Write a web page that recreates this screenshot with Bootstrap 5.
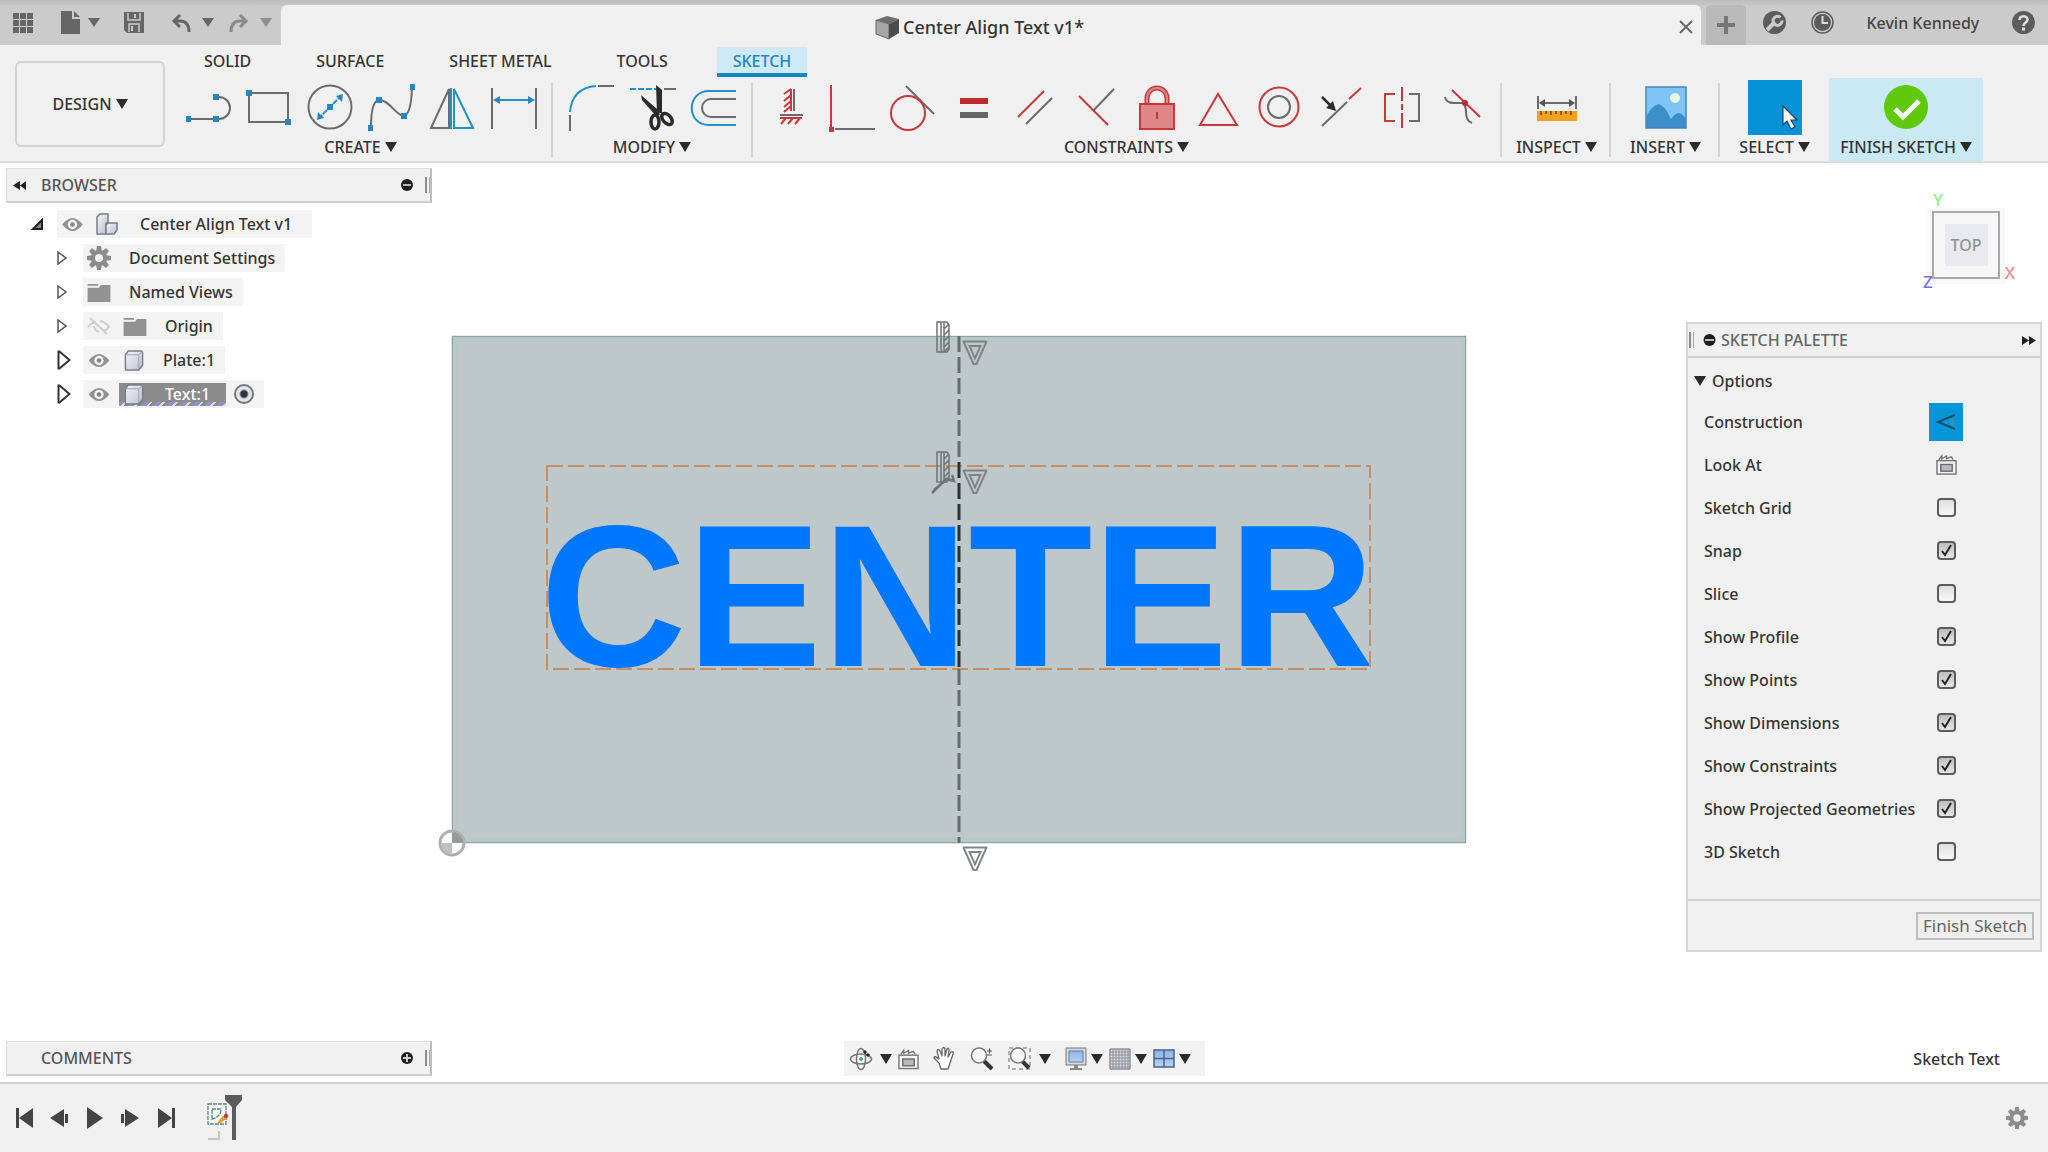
<!DOCTYPE html>
<html lang="en">
<head>
<meta charset="utf-8">
<meta name="viewport" content="width=device-width, initial-scale=1">
<title>Center Align Text v1</title>
<link href="https://cdn.jsdelivr.net/npm/bootstrap@5.3.0/dist/css/bootstrap.min.css" rel="stylesheet">
<style>
  :root { --ink:#353535; --chrome:#f0f0f0; --rule:#d3d3d3; --brand:#0696d7; --red:#c8373c; --gray:#6b6b6b; }
  body { font-family:"Noto Sans","Open Sans",sans-serif; font-size:16px; line-height:24px; color:var(--ink); background:#fff; font-weight:500; }
  svg { overflow:visible; flex:none; display:block; }
  .plain { background:none; border:0; padding:0; color:inherit; font-weight:inherit; line-height:inherit; }
  .tri { width:0; height:0; border:6px solid transparent; border-top:10px solid #2b2b2b; border-bottom:0; display:block; flex:none; }
  .tri.soft { border-top-color:#666; border-top-width:9px; }
  .tri.faint { border-top-color:#8f8f8f; border-top-width:9px; }

  .titlebar { height:45px; background:linear-gradient(#bdbdbd 0,#c4c4c4 4px,#cbcbcb 6px,#cbcbcb 100%); color:#444; }
  .quick { width:281px; padding-left:13px; }
  .quick .wide { margin-left:28px; }
  .quick .near { margin-left:16px; }
  .quick .mid { margin-left:24px; }
  .quick .step { gap:12px; }
  .doc-tab { height:40px; background:var(--chrome); border-radius:6px 0 0 0; color:var(--ink); font-size:18px; border-top-right-radius:6px; }
  .new-tab { width:40px; height:40px; background:#b9b9b9; border-radius:5px 5px 0 0; margin-left:5px; }
  .account { width:302px; font-size:16px; padding-left:17px; padding-right:13px; }

  .ribbon { height:118px; background:var(--chrome); border-bottom:2px solid #dcdcdc; }
  .workspace { width:150px; height:86px; margin:16px 5px 0 15px; border:2px solid var(--rule); border-radius:6px; }
  .ribbon-tabs { height:33px; gap:33px; padding-left:18px; }
  .ribbon-tabs a { color:var(--ink); text-decoration:none; padding:2px 16px 0; height:30px; margin-top:2px; line-height:24px; }
  .ribbon-tabs a.active { background:#cfeaf6; color:#1a88c6; border-bottom:4px solid #1287c0; }
  .tool-group { height:83px; padding:7px 18px 0 16px; position:relative; }
  .ruled::after { content:""; position:absolute; right:0; top:5px; height:74px; width:2px; background:var(--rule); }
  .tools { height:44px; gap:17px; }
  .tool-label { height:34px; gap:4px; line-height:34px; padding-top:2px; white-space:nowrap; }
  .single { width:109px; padding-left:0; padding-right:0; }
  .finish { width:154px; background:#c9eaf5; padding-left:0; padding-right:0; }
  .g { stroke:var(--gray); stroke-width:2; fill:none; }
  .r { stroke:var(--red); stroke-width:2; fill:none; }
  .b { stroke:#2191c9; stroke-width:2; fill:none; }
  .bf { fill:#2b85bd; }

  .stage { min-height:0; }
  .scene { position:absolute; inset:0; width:100%; height:100%; }
  .hud { position:relative; height:100%; padding:5px 6px 6px; }
  .panel-head { width:426px; height:35px; background:#f0f0f0; border:1px solid #dedede; border-right:2px solid #bdbdbd; border-bottom:2px solid #cfcfcf; color:#555; padding:0 0 0 6px; }
  .panel-head .name { padding-left:15px; }
  .panel-head .name.inset { padding-left:28px; }
  .grip { width:5px; height:16px; border-left:2px solid #8d8d8d; border-right:1px solid #aaa; }
  .tree { list-style:none; margin:4px 0 0; padding:0; }
  .tree li { height:34px; display:flex; align-items:center; }
  .twist { width:26px; margin-left:51px; height:28px; display:flex; align-items:center; }
  .root .twist { margin-left:25px; }
  .node { height:28px; background:#f3f3f3; display:flex; align-items:center; padding-left:4px; }
  .node svg { margin-right:12px; }
  .node .cap { padding-left:6px; padding-right:10px; white-space:nowrap; }
  .root .node .cap { padding-left:10px; padding-right:20px; }
  .picked { height:23px; background:#8b8b8b; color:#fff; padding:0 16px 0 4px; margin-left:-4px; margin-right:8px; position:relative; }
  .picked::after { content:""; position:absolute; left:0; right:0; bottom:0; height:4px; background:repeating-linear-gradient(135deg,#8f93c8 0 4px,#d4d6dc 4px 6px,#8b8b8b 6px 9px); }
  .picked svg { position:relative; z-index:1; }
  .act { appearance:none; width:20px; height:20px; border-radius:50%; border:2px solid #777; background:radial-gradient(circle,#2f3340 0 3px,#e2e4ea 5px); margin:0 10px 0 0; }

  .cube { width:120px; height:110px; margin:21px 0 23px; }
  .palette { width:356px; background:#f0f0f0; border:2px solid #d6d6d6; }
  .palette-head { height:34px; border-bottom:2px solid #d0d0d0; color:#666; padding:0 4px 0 1px; gap:5px; }
  .fold { height:38px; gap:6px; margin:4px 0 0 6px; }
  .opt { height:43px; padding:0 77px 0 16px; font-size:16px; }
  .opt .slot { width:34px; }
  .opt input { appearance:none; width:19px; height:19px; margin:0; border:2px solid #5c5c5c; border-radius:4px; background:linear-gradient(#e0e0e0,#f7f7f7); }
  .opt input:checked { background:url("data:image/svg+xml,%3Csvg xmlns='http://www.w3.org/2000/svg' viewBox='0 0 15 15'%3E%3Cpath d='M3 8l3 4 6-10' fill='none' stroke='%23222' stroke-width='2'/%3E%3C/svg%3E") center/15px no-repeat,linear-gradient(#bdbdbd,#e6e6e6); }
  .cons { width:34px; height:38px; background:var(--brand); }
  .palette-foot { border-top:2px solid #d0d0d0; height:51px; padding:0 6px; margin-top:26px; }
  .done { height:28px; border:2px solid #bcbcbc; background:#eee; color:#666; font-size:17px; line-height:22px; padding:0 5px; }

  .navbox { height:35px; background:#f2f2f2; width:361px; padding:0 13px 0 6px; }
  .bottom-left, .bottom-right { flex:1 1 0; }
  .status { margin-right:42px; }
  .timeline { height:70px; background:var(--chrome); border-top:2px solid #d3d3d3; padding:0 20px 0 15px; }
</style>
<script src="https://cdn.jsdelivr.net/npm/bootstrap@5.3.0/dist/js/bootstrap.bundle.min.js"></script>
</head>
<body>
<svg width="0" height="0" class="position-absolute" aria-hidden="true">
  <defs>
    <linearGradient id="steel" x1="0" y1="0" x2="1" y2="1"><stop offset="0" stop-color="#f4f6fb"/><stop offset="1" stop-color="#bcc0cb"/></linearGradient>
    <linearGradient id="screen" x1="0" y1="0" x2="0" y2="1"><stop offset="0" stop-color="#8fb5e4"/><stop offset="1" stop-color="#b5d0f2"/></linearGradient>
  </defs>
  <symbol id="eye" viewBox="0 0 24 16"><path d="M1 8Q12-6 23 8Q12 22 1 8z" fill="#929292"/><circle cx="12" cy="8" r="5" fill="#f3f3f3"/><circle cx="12" cy="8" r="2.5" fill="#858585"/></symbol>
  <symbol id="folder" viewBox="0 0 24 20"><path d="M0 1h11v2H0zM0 5h12l2-3h10v18H0z" fill="#929292"/></symbol>
  <symbol id="gear" viewBox="0 0 24 24"><g fill="#8c8c8c"><path d="M10 0h4l1 6h-6z"/><path d="M10 0h4l1 6h-6z" transform="rotate(45 12 12)"/><path d="M10 0h4l1 6h-6z" transform="rotate(90 12 12)"/><path d="M10 0h4l1 6h-6z" transform="rotate(135 12 12)"/><path d="M10 0h4l1 6h-6z" transform="rotate(180 12 12)"/><path d="M10 0h4l1 6h-6z" transform="rotate(225 12 12)"/><path d="M10 0h4l1 6h-6z" transform="rotate(270 12 12)"/><path d="M10 0h4l1 6h-6z" transform="rotate(315 12 12)"/></g><circle cx="12" cy="12" r="6" fill="none" stroke="#8c8c8c" stroke-width="4"/></symbol>
  <symbol id="solid" viewBox="0 0 22 22"><path d="M2 5l3-4h14l1 2v13l-4 5H2z" fill="url(#steel)" stroke="#777c8a" stroke-width="1.5" stroke-linejoin="round"/><path d="M2 5h14v15M16 5l4-3" fill="none" stroke="#9a9eaa" stroke-width="1"/></symbol>
  <symbol id="lookat" viewBox="0 0 22 22"><rect x="1" y="7" width="20" height="14" fill="#f4f4f4" stroke="#777" stroke-width="1.5"/><rect x="5" y="11" width="12" height="7" fill="#b8bcc2" stroke="#6b6b6b" stroke-width="1.5"/><path d="M3 6l3-4v3l5-3v3l5-2 2 3" fill="none" stroke="#777" stroke-width="1.5"/></symbol>
  <symbol id="twist-s" viewBox="0 0 10 14"><path d="M1 1l8 6-8 6z" fill="#fff" stroke="#555" stroke-width="1.5"/></symbol>
  <symbol id="twist-l" viewBox="0 0 14 20"><path d="M1.500 1.500h1l10 8.500-10 8.500h-1z" fill="#fff" stroke="#333" stroke-width="2"/></symbol>
  <symbol id="vtri" viewBox="0 0 26 26"><path d="M1.500 1.500h23L14.500 24h-3z" fill="none" stroke="#7d8485" stroke-width="1.900" stroke-linejoin="round"/><path d="M7.500 6h11L13 18.500z" fill="none" stroke="#7d8485" stroke-width="1.900"/></symbol>
  <symbol id="rule" viewBox="0 0 14 32"><path d="M1 1h10l2 3v24l-2 3H1zM5 1v30M8 1v30M8 8l5-5M8 14l5-5M8 20l5-5M8 26l5-5M8 31l5-5" fill="none" stroke="#6f7677" stroke-width="1.500"/></symbol>
</svg>

<div class="vh-100 d-flex flex-column overflow-hidden">
  <header class="titlebar d-flex align-items-end flex-shrink-0">
    <div class="quick d-flex align-items-center h-100">
      <button class="plain" aria-label="Data panel"><svg width="20" height="20" fill="#666"><path d="M0 0h6v6H0zM7 0h6v6H7zM14 0h6v6h-6zM0 7h6v6H0zM7 7h6v6H7zM14 7h6v6h-6zM0 14h6v6H0zM7 14h6v6H7zM14 14h6v6h-6z"/></svg></button>
      <button class="plain wide d-flex align-items-center gap-2" aria-label="File"><svg width="19" height="23" fill="#666"><path d="M0 0h11v8h8v15H0zM13 0l6 6h-6z"/></svg><span class="tri soft"></span></button>
      <button class="plain mid" aria-label="Save"><svg width="20" height="21"><path d="M0 0h20v21H3l-3-3z" fill="#666"/><path d="M4 1v7h12V1M5 20v-8h10v8" fill="none" stroke="#cbcbcb" stroke-width="1.500"/><path d="M11 2v4M8 14v5" stroke="#cbcbcb" stroke-width="2"/></svg></button>
      <button class="plain wide step d-flex align-items-center" aria-label="Undo"><svg width="18" height="18" fill="none" stroke="#666" stroke-width="3"><path d="M8 1L2 7l6 6M2 7h6q9 0 9 11"/></svg><span class="tri soft"></span></button>
      <button class="plain near step d-flex align-items-center" aria-label="Redo"><svg width="18" height="18" fill="none" stroke="#8a8a8a" stroke-width="3"><path d="M10 1l6 6-6 6M16 7h-6Q1 7 1 18"/></svg><span class="tri faint"></span></button>
    </div>
    <div class="doc-tab flex-fill d-flex align-items-center pe-1">
      <div class="flex-fill d-flex justify-content-center align-items-center gap-1 pt-1">
        <svg width="23" height="23"><path d="M0 4l11-4 12 3-10 5z" fill="#6e6e6e"/><path d="M0 4l13 4v15L0 18z" fill="#a6a6a6" stroke="#666"/><path d="M13 8l10-5v14l-10 6z" fill="#4c4c4c"/></svg>
        <span>Center Align Text v1*</span>
      </div>
      <button class="plain pe-1 pt-1" aria-label="Close"><svg width="14" height="14" stroke="#666" stroke-width="2"><path d="M1 1l12 12M13 1L1 13"/></svg></button>
    </div>
    <button class="plain new-tab d-flex align-items-center justify-content-center" aria-label="New tab"><svg width="18" height="18" fill="#777"><path d="M7 0h4v7h7v4h-7v7H7v-7H0V7h7z"/></svg></button>
    <div class="account d-flex align-items-center justify-content-between h-100">
      <button class="plain" aria-label="Extensions"><svg width="23" height="23"><circle cx="11.500" cy="11.500" r="11.500" fill="#5c5c5c"/><path d="M4 19l8-8" stroke="#cbcbcb" stroke-width="4"/><path d="M17.500 6.500a4.500 4.500 0 1 0 1.500 3" fill="none" stroke="#cbcbcb" stroke-width="3"/></svg></button>
      <button class="plain" aria-label="Job status"><svg width="23" height="23"><circle cx="11.500" cy="11.500" r="10.500" fill="none" stroke="#5c5c5c" stroke-width="1.500"/><circle cx="11.500" cy="11.500" r="8.500" fill="#5c5c5c"/><path d="M11.500 5v7H17" fill="none" stroke="#ddd" stroke-width="2"/></svg></button>
      <button class="plain px-2">Kevin Kennedy</button>
      <button class="plain" aria-label="Help"><svg width="23" height="23"><circle cx="11.500" cy="11.500" r="11.500" fill="#5c5c5c"/><path d="M7.500 9c0-5 8-5 8-.5 0 3-4 3-4 6.500" fill="none" stroke="#ddd" stroke-width="2.500"/><rect x="10" y="16.500" width="3" height="3" fill="#ddd"/></svg></button>
    </div>
  </header>

  <div class="ribbon d-flex flex-shrink-0">
    <button class="plain workspace d-flex align-items-center justify-content-center gap-1">DESIGN<span class="tri"></span></button>
    <div class="flex-fill">
      <nav class="ribbon-tabs d-flex">
        <a href="#">SOLID</a><a href="#">SURFACE</a><a href="#">SHEET METAL</a><a href="#">TOOLS</a><a href="#" class="active">SKETCH</a>
      </nav>
      <div class="d-flex">
        <div class="tool-group ruled">
          <div class="tools d-flex align-items-center">
            <button class="plain" aria-label="Line"><svg width="44" height="44"><path class="g" d="M2 34h28M30 12h3a11 11 0 0 1 0 22h-3"/><path class="bf" d="M0 31h5v6H0zM27 31h6v6h-6zM27 9h6v6h-6z"/></svg></button>
            <button class="plain" aria-label="Rectangle"><svg width="44" height="44"><path class="g" d="M2 8h39v29H2z"/><path class="bf" d="M-1 5h6v6h-6zM38 34h6v6h-6z"/></svg></button>
            <button class="plain" aria-label="Circle"><svg width="44" height="44"><circle class="g" cx="22" cy="22" r="21.500"/><path class="b" d="M14 30l-3 3M30 14l3-3M15 29l4-4M25 19l4-4"/><path class="bf" d="M9 35l1-8 6 6zM35 9l-1 8-6-6zM19 19h6v6h-6z"/></svg></button>
            <button class="plain" aria-label="Spline"><svg width="44" height="44"><path class="g" d="M2 42Q2 16 10 15C19 14 26 29 34 31Q42 31 43 3"/><path class="bf" d="M-1 40h5v6h-5zM7 12h6v6H7zM32 28h6v6h-6zM41-1h5v6h-5z"/></svg></button>
            <button class="plain" aria-label="Mirror"><svg width="44" height="44"><path class="g" d="M1 43h18V4z"/><path class="b" d="M24 4v39h19z"/><path class="b" d="M21 3v41"/></svg></button>
            <button class="plain" aria-label="Sketch dimension"><svg width="44" height="44"><path class="g" d="M1 3v41M45 3v41"/><path class="b" d="M4 15h38"/><path class="bf" d="M2 15l7-4v8zM44 15l-7-4v8z"/></svg></button>
          </div>
          <button class="plain tool-label d-flex align-items-center justify-content-center w-100">CREATE<span class="tri"></span></button>
        </div>
        <div class="tool-group ruled">
          <div class="tools d-flex align-items-center">
            <button class="plain" aria-label="Fillet"><svg width="44" height="44"><path class="g" d="M1 46V30M29 1h16"/><path class="b" d="M1 27Q3 3 27 1"/></svg></button>
            <button class="plain" aria-label="Trim"><svg width="44" height="44"><path class="b" d="M0 4h26" stroke-dasharray="6 2"/><path class="g" d="M34 4h12"/><path d="M26 0l6 5v23h-5zM11 10l16 14 3 6-4 1L12 15z" fill="#2b2b2b"/><ellipse cx="25" cy="37" rx="4" ry="7" fill="none" stroke="#2b2b2b" stroke-width="3.500"/><ellipse cx="37" cy="34" rx="4" ry="6.500" transform="rotate(-42 37 34)" fill="none" stroke="#2b2b2b" stroke-width="3.500"/></svg></button>
            <button class="plain" aria-label="Offset"><svg width="44" height="44"><path class="b" d="M45 6H18C-5 6-5 40 18 40h27" stroke-width="2.500"/><path class="g" d="M45 14H20a9 9 0 0 0 0 18h25"/></svg></button>
          </div>
          <button class="plain tool-label d-flex align-items-center justify-content-center w-100">MODIFY<span class="tri"></span></button>
        </div>
        <div class="tool-group ruled">
          <div class="tools d-flex align-items-center">
            <button class="plain" aria-label="Horizontal/Vertical"><svg width="44" height="44"><path class="g" d="M25 4v22M11 30h23"/><path class="r" d="M22 4v22M11 33h22M22 4l-7 5M22 10l-7 6M22 16l-7 6M22 21l-7 6M17 33l-5 6M24 33l-5 6M31 33l-5 6"/></svg></button>
            <button class="plain" aria-label="Coincident"><svg width="44" height="44"><path class="r" d="M1 0v42"/><path class="g" d="M5 44h40"/><path d="M-1 42h5v5h-5z" fill="#c8373c"/></svg></button>
            <button class="plain" aria-label="Tangent"><svg width="44" height="44"><path class="g" d="M15 1l28 28"/><circle class="r" cx="17" cy="28" r="17"/></svg></button>
            <button class="plain" aria-label="Equal"><svg width="44" height="44"><path d="M8 13h28v6H8z" fill="#bf2a2f"/><path d="M8 27h28v6H8z" fill="#666"/></svg></button>
            <button class="plain" aria-label="Parallel"><svg width="44" height="44"><path class="r" d="M5 32L31 6"/><path class="g" d="M13 39l26-26"/></svg></button>
            <button class="plain" aria-label="Perpendicular"><svg width="44" height="44"><path class="g" d="M19 26L40 4"/><path class="r" d="M5 11l29 29"/></svg></button>
            <button class="plain" aria-label="Fix"><svg width="44" height="44"><path d="M12 20V13a10 10 0 0 1 20 0v7" fill="none" stroke="#c8373c" stroke-width="5"/><path d="M12 20V13a10 10 0 0 1 20 0v7" fill="none" stroke="#e38586" stroke-width="2"/><rect x="5" y="19" width="34" height="25" fill="#df8788" stroke="#c8373c" stroke-width="2"/><path class="r" d="M22 27v7"/></svg></button>
            <button class="plain" aria-label="Equal triangle"><svg width="44" height="44"><path class="r" d="M22 9l19 31H4z"/></svg></button>
            <button class="plain" aria-label="Concentric"><svg width="44" height="44"><circle class="r" cx="22" cy="22" r="19.500"/><circle class="g" cx="22" cy="22" r="11"/></svg></button>
            <button class="plain" aria-label="Midpoint"><svg width="44" height="44"><path class="g" d="M4 41l25-24"/><path class="r" d="M31 14L43 3"/><path d="M4 12l10 10" stroke="#2b2b2b" stroke-width="2.500"/><path d="M18 26l-10-3 7-7z" fill="#2b2b2b"/></svg></button>
            <button class="plain" aria-label="Symmetry"><svg width="44" height="44"><path class="r" d="M16 9H6v27h10M23 2v14M23 19v6M23 28v15"/><path class="g" d="M30 9h10v27H30"/></svg></button>
            <button class="plain" aria-label="Curvature"><svg width="44" height="44"><path class="g" d="M5 12q1 6 9 6h9q3 3 3 9 0 9 6 11"/><path class="r" d="M12 5l28 27"/><circle cx="25" cy="18" r="3" fill="#bf2a2f"/></svg></button>
          </div>
          <button class="plain tool-label d-flex align-items-center justify-content-center w-100">CONSTRAINTS<span class="tri"></span></button>
        </div>
        <div class="tool-group single ruled">
          <div class="tools d-flex align-items-center justify-content-center">
            <svg width="40" height="44"><path class="g" d="M1 11v13M39 11v13M4 18h32"/><path d="M2 18l6-4v8zM38 18l-6-4v8z" fill="#555"/><path d="M0 26h40v10H0z" fill="#f0a11e"/><path d="M4 26v4M9 26v3M14 26v4M19 26v3M24 26v4M29 26v3M34 26v4" stroke="#6a4a10" stroke-width="1.500"/></svg>
          </div>
          <button class="plain tool-label d-flex align-items-center justify-content-center w-100">INSPECT<span class="tri"></span></button>
        </div>
        <div class="tool-group single ruled">
          <div class="tools d-flex align-items-center justify-content-center">
            <svg width="42" height="42"><path d="M1 1h40v41H1z" fill="#7fc4f7"/><path d="M1 31q6-12 13-13 6 2 12 15 4-6 8-6 4 1 7 6v9H1z" fill="#3b8fca"/><circle cx="30" cy="12" r="5" fill="#e9f5dc"/><path d="M1 1h40v41H1z" fill="none" stroke="#4a86b0" stroke-width="1.500"/></svg>
          </div>
          <button class="plain tool-label d-flex align-items-center justify-content-center w-100">INSERT<span class="tri"></span></button>
        </div>
        <div class="tool-group single">
          <div class="tools d-flex align-items-center justify-content-center">
            <svg width="54" height="55"><path d="M0 0h54v55H0z" fill="#0692d6"/><path d="M35 26v19l4-4 4 8 4-2-4-7h6z" fill="#fff" stroke="#24435a" stroke-width="1.200"/></svg>
          </div>
          <button class="plain tool-label d-flex align-items-center justify-content-center w-100">SELECT<span class="tri"></span></button>
        </div>
        <div class="tool-group finish">
          <div class="tools d-flex align-items-center justify-content-center">
            <svg width="44" height="44"><circle cx="22" cy="22" r="22" fill="#5fc90b"/><path d="M11 24l8 8 16-16" fill="none" stroke="#fff" stroke-width="5"/></svg>
          </div>
          <button class="plain tool-label d-flex align-items-center justify-content-center w-100">FINISH SKETCH<span class="tri"></span></button>
        </div>
      </div>
    </div>
  </div>

  <main class="stage flex-fill position-relative">
    <svg class="scene" viewBox="0 163 2048 919" role="img" aria-label="Plate with sketch text">
      <rect x="452.500" y="336.500" width="1013" height="506" fill="#bec7c9" stroke="#8fa3a1" stroke-width="1.500"/>
      <rect x="455" y="339" width="1008" height="501" fill="none" stroke="#b9c8c6" stroke-width="4"/>
      <text x="540" y="666" font-family="Liberation Sans, Arial, sans-serif" font-weight="700" font-size="203" fill="#0077ff">CENTER</text>
      <path d="M547 466h823v203H547z" fill="none" stroke="#c68f63" stroke-width="2" stroke-dasharray="16 5"/>
      <path d="M959 336v126M959 669v174" stroke="#666d6e" stroke-width="3" stroke-dasharray="16 5"/>
      <path d="M959 462v207" stroke="#2d3437" stroke-width="3" stroke-dasharray="16 5"/>
      <use href="#rule" x="936" y="321" width="14" height="32"/>
      <use href="#rule" x="936" y="451" width="14" height="32"/>
      <path d="M932 493l14-14 8 2-2-6M934 490l12-10" stroke="#6f7677" stroke-width="2.500" fill="none"/>
      <use href="#vtri" x="962" y="340" width="26" height="26"/>
      <use href="#vtri" x="962" y="469" width="26" height="26"/>
      <use href="#vtri" x="962" y="846" width="26" height="26"/>
      <g><circle cx="452" cy="843" r="12" fill="#fff" fill-opacity=".8" stroke="#b0b0b0" stroke-width="3"/><path d="M452 843v-11a11 11 0 0 1 11 11z" fill="#949c9d"/><path d="M452 843v11a11 11 0 0 1-11-11z" fill="#c0c0c0"/></g>
    </svg>

    <div class="hud d-flex flex-column justify-content-between">
      <div class="d-flex justify-content-between align-items-start">
        <section>
          <div class="panel-head d-flex align-items-center">
            <svg width="13" height="9" fill="#222"><path d="M7 0v9L0 4.500zM13 0v9L7 4.500z"/></svg>
            <span class="flex-fill name">BROWSER</span>
            <svg width="12" height="12" class="me-2"><circle cx="6" cy="6" r="6" fill="#1e1e1e"/><path d="M2 6h8" stroke="#bbb" stroke-width="2"/></svg>
            <span class="grip ms-1"></span>
          </div>
          <ul class="tree">
            <li class="root"><span class="twist"><svg width="12" height="11"><path d="M11 1v9H2z" fill="#888" stroke="#222" stroke-width="2"/></svg></span><span class="node"><svg width="23" height="15"><use href="#eye"/></svg><svg width="22" height="22"><path d="M1 4l3-3h8v9h-2v11H1z" fill="url(#steel)" stroke="#777c8a" stroke-width="1.500"/><path d="M10 12l2-2h9v7l-3 4h-8z" fill="url(#steel)" stroke="#777c8a" stroke-width="1.500"/></svg><span class="cap">Center Align Text v1</span></span></li>
            <li><span class="twist"><svg width="10" height="14"><use href="#twist-s"/></svg></span><span class="node"><svg width="24" height="24"><use href="#gear"/></svg><span class="cap">Document Settings</span></span></li>
            <li><span class="twist"><svg width="10" height="14"><use href="#twist-s"/></svg></span><span class="node"><svg width="24" height="19"><use href="#folder"/></svg><span class="cap">Named Views</span></span></li>
            <li><span class="twist"><svg width="10" height="14"><use href="#twist-s"/></svg></span><span class="node"><svg width="24" height="18" fill="none" stroke="#cdcdcd" stroke-width="2"><path d="M1 10q4-5 8-5M13 4q6 1 9 6-3 3-5 4M3 1l17 16M7 9q0 4 5 6"/></svg><svg width="24" height="19"><use href="#folder"/></svg><span class="cap">Origin</span></span></li>
            <li><span class="twist"><svg width="14" height="20"><use href="#twist-l"/></svg></span><span class="node"><svg width="24" height="15"><use href="#eye"/></svg><svg width="22" height="21"><use href="#solid"/></svg><span class="cap">Plate:1</span></span></li>
            <li><span class="twist"><svg width="14" height="20"><use href="#twist-l"/></svg></span><span class="node"><svg width="24" height="15"><use href="#eye"/></svg><span class="picked d-flex align-items-center"><svg width="22" height="21"><use href="#solid"/></svg><span class="ps-2">Text:1</span></span><input class="act" type="radio" checked aria-label="Activate component"></span></li>
          </ul>
        </section>
        <div class="d-flex flex-column align-items-end">
          <svg class="cube" viewBox="1921 189 120 110" font-weight="500">
            <rect x="1926" y="208" width="78" height="76" fill="#f8f8f8"/>
            <rect x="1932" y="212" width="66" height="66" fill="#f6f6f7" stroke="#a8a8a8" stroke-width="2"/>
            <rect x="1944" y="224" width="43" height="42" fill="#e9eaef"/>
            <text x="1965" y="251" text-anchor="middle" font-size="16" fill="#8d9298">TOP</text>
            <text x="1937" y="206" text-anchor="middle" font-size="17" fill="#8fee8f">Y</text>
            <text x="2009" y="279" text-anchor="middle" font-size="17" fill="#f58b8b">X</text>
            <text x="1927" y="288" text-anchor="middle" font-size="17" fill="#7a72ee">Z</text>
          </svg>
          <section class="palette">
            <div class="palette-head d-flex align-items-center">
              <span class="grip"></span>
              <svg width="13" height="12" class="ms-1"><circle cx="6.500" cy="6" r="6" fill="#1e1e1e"/><path d="M2 6h9" stroke="#bbb" stroke-width="2"/></svg>
              <span class="flex-fill">SKETCH PALETTE</span>
              <svg width="14" height="9" fill="#222"><path d="M0 0v9l7-4.500zM7 0v9l7-4.500z"/></svg>
            </div>
            <button class="plain fold d-flex align-items-center"><span class="tri"></span>Options</button>
            <div class="opt d-flex align-items-center justify-content-between"><span>Construction</span><button class="plain cons d-flex align-items-center justify-content-center" aria-label="Construction"><svg width="18" height="16"><path d="M18 1L1 8l17 7" fill="none" stroke="#0c4f73" stroke-width="2"/><path d="M15 5v7" stroke="#8d8a3d" stroke-width="1.500" stroke-dasharray="2 2"/></svg></button></div>
            <div class="opt d-flex align-items-center justify-content-between"><span>Look At</span><button class="plain slot d-flex justify-content-center" aria-label="Look At"><svg width="21" height="21"><use href="#lookat"/></svg></button></div>
            <div class="opt d-flex align-items-center justify-content-between"><label for="o1">Sketch Grid</label><span class="slot d-flex justify-content-center"><input id="o1" type="checkbox"></span></div>
            <div class="opt d-flex align-items-center justify-content-between"><label for="o2">Snap</label><span class="slot d-flex justify-content-center"><input id="o2" type="checkbox" checked></span></div>
            <div class="opt d-flex align-items-center justify-content-between"><label for="o3">Slice</label><span class="slot d-flex justify-content-center"><input id="o3" type="checkbox"></span></div>
            <div class="opt d-flex align-items-center justify-content-between"><label for="o4">Show Profile</label><span class="slot d-flex justify-content-center"><input id="o4" type="checkbox" checked></span></div>
            <div class="opt d-flex align-items-center justify-content-between"><label for="o5">Show Points</label><span class="slot d-flex justify-content-center"><input id="o5" type="checkbox" checked></span></div>
            <div class="opt d-flex align-items-center justify-content-between"><label for="o6">Show Dimensions</label><span class="slot d-flex justify-content-center"><input id="o6" type="checkbox" checked></span></div>
            <div class="opt d-flex align-items-center justify-content-between"><label for="o7">Show Constraints</label><span class="slot d-flex justify-content-center"><input id="o7" type="checkbox" checked></span></div>
            <div class="opt d-flex align-items-center justify-content-between"><label for="o8">Show Projected Geometries</label><span class="slot d-flex justify-content-center"><input id="o8" type="checkbox" checked></span></div>
            <div class="opt d-flex align-items-center justify-content-between"><label for="o9">3D Sketch</label><span class="slot d-flex justify-content-center"><input id="o9" type="checkbox"></span></div>
            <div class="palette-foot d-flex align-items-center justify-content-end"><button class="done">Finish Sketch</button></div>
          </section>
        </div>
      </div>

      <div class="d-flex align-items-center">
        <div class="bottom-left">
          <div class="panel-head d-flex align-items-center">
            <span class="flex-fill name inset">COMMENTS</span>
            <svg width="12" height="12" class="me-2"><circle cx="6" cy="6" r="6" fill="#1e1e1e"/><path d="M2 6h8M6 2v8" stroke="#ccc" stroke-width="2"/></svg>
            <span class="grip ms-1"></span>
          </div>
        </div>
        <div class="navbox d-flex align-items-center justify-content-between">
          <button class="plain d-flex align-items-center gap-2" aria-label="Orbit"><svg width="22" height="22" fill="none" stroke="#777" stroke-width="1.500"><ellipse cx="11" cy="11" rx="10.500" ry="5"/><ellipse cx="11" cy="11" rx="4.500" ry="10.500"/><path d="M9 11h4M11 9v4" stroke="#2a9a9a"/><path d="M14 5l2-2M17 8l2-2" stroke="#222" stroke-width="3"/></svg><span class="tri"></span></button>
          <button class="plain" aria-label="Look At"><svg width="21" height="22"><use href="#lookat"/></svg></button>
          <button class="plain mx-2" aria-label="Pan"><svg width="23" height="23"><path d="M8 22l-2-6-5-5q0-3 5 1L4 4q1-3 3 0l2 5V2q2-3 3 0v7l2-7q2-2 2 1l-1 7 3-5q3-1 2 2l-3 9-2 6z" fill="#fff" stroke="#666" stroke-width="1.300" stroke-linejoin="round"/></svg></button>
          <button class="plain" aria-label="Zoom"><svg width="23" height="23"><path d="M14 14l8 8" stroke="#333" stroke-width="4"/><circle cx="9" cy="8.500" r="7.500" fill="#fbfdfd" stroke="#777" stroke-width="1.500"/><path d="M17 4h5M19.500 1.500v5M17 8h5" stroke="#555" stroke-width="1.200"/></svg></button>
          <button class="plain d-flex align-items-center gap-2 ms-2" aria-label="Fit"><svg width="23" height="23"><path d="M1 1h21v21H1z" fill="none" stroke="#999" stroke-width="1.500" stroke-dasharray="4 3"/><path d="M14 14l7 7" stroke="#333" stroke-width="4"/><circle cx="10" cy="8.500" r="7.500" fill="#fbfdfd" stroke="#777" stroke-width="1.500"/></svg><span class="tri"></span></button>
          <button class="plain d-flex align-items-center gap-1 ms-2" aria-label="Display settings"><svg width="22" height="23"><path d="M1 1h20v17H1z" fill="#d5d8dd" stroke="#777"/><path d="M4 4h14v11H4z" fill="url(#screen)" stroke="#5b82b5"/><path d="M9 18h4v3h4v2H5v-2h4z" fill="#888"/></svg><span class="tri"></span></button>
          <button class="plain d-flex align-items-center gap-1" aria-label="Grid settings"><svg width="22" height="22"><path d="M1 1h20v20H1z" fill="#dcdfe4" stroke="#666"/><path d="M4 1v20M7 1v20M10 1v20M13 1v20M16 1v20M19 1v20M1 4h20M1 7h20M1 10h20M1 13h20M1 16h20M1 19h20" stroke="#8b8f97"/></svg><span class="tri"></span></button>
          <button class="plain d-flex align-items-center gap-1" aria-label="Viewports"><svg width="22" height="19"><path d="M1 1h20v17H1zM11 1v17M1 9.500h20" fill="url(#screen)" stroke="#47658d" stroke-width="1.500"/></svg><span class="tri"></span></button>
        </div>
        <div class="bottom-right text-end"><span class="status text-nowrap">Sketch Text</span></div>
      </div>
    </div>
  </main>

  <footer class="timeline d-flex align-items-center justify-content-between flex-shrink-0">
    <div class="d-flex align-items-center">
      <div class="d-flex gap-3">
        <button class="plain" aria-label="Start"><svg width="20" height="20" fill="#444"><path d="M1 0h3v20H1zM18 0v20L4 10z"/></svg></button>
        <button class="plain" aria-label="Step back"><svg width="20" height="20" fill="#444"><path d="M13 1v18L-1 10zM14 6h3v9h-3z"/></svg></button>
        <button class="plain" aria-label="Play"><svg width="20" height="20" fill="#444"><path d="M0-1v22l16-11z"/></svg></button>
        <button class="plain" aria-label="Step forward"><svg width="20" height="20" fill="#444"><path d="M-2 6h3v9h-3zM2 1v18l14-9z"/></svg></button>
        <button class="plain" aria-label="End"><svg width="20" height="20" fill="#444"><path d="M-1 0v20l14-10zM13 0h3v20h-3z"/></svg></button>
      </div>
      <svg width="38" height="46" class="ms-4">
        <path d="M5 9h18v20H5zM9 24V14h9q0 8-9 10z" fill="#fdfdfd" stroke="#56838c" stroke-width="1.300" stroke-dasharray="4 1"/>
        <path d="M14 29l2-4 5-5 3 3-6 5z" fill="#e9a32c"/><circle cx="23" cy="21" r="2.200" fill="#c8373c"/><path d="M5 44h11v-8" fill="none" stroke="#c4c4c4" stroke-width="2"/>
        <path d="M22 0h17v5l-6 7v33h-4V12l-7-7z" fill="#5c5c5c"/>
      </svg>
    </div>
    <button class="plain" aria-label="Timeline settings"><svg width="22" height="22"><use href="#gear"/></svg></button>
  </footer>
</div>
</body>
</html>
